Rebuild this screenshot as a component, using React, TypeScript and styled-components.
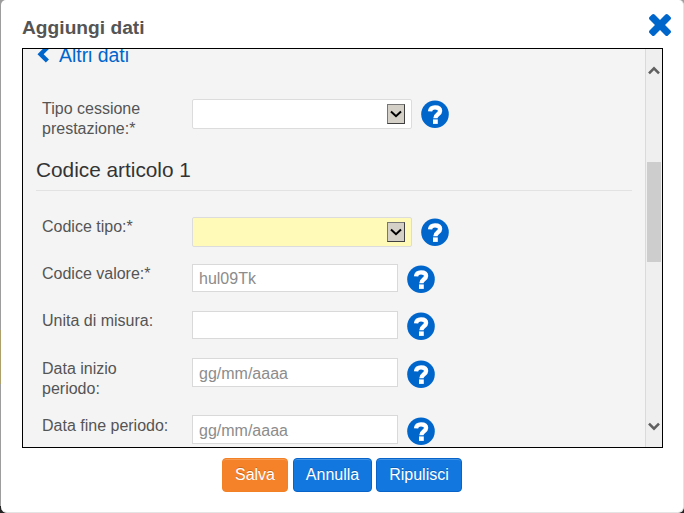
import React from "react";
import styled, { createGlobalStyle } from "styled-components";

const Global = createGlobalStyle`
  * { box-sizing: border-box; }
  body { margin: 0; background: #a3a3a3; font: 16px/20px "Liberation Sans", Arial, sans-serif; color: #555; overflow: hidden; }
`;

const Backdrop = styled.div`
  width: 684px;
  height: 513px;
  background: linear-gradient(#9d9d9d 0 330px, #ada06b 330px 384px, #9d9d9d 384px 506px, #222 506px);
  padding-left: 1px;
`;

const Dialog = styled.div`
  height: 513px;
  display: flex;
  flex-direction: column;
  background: #fff;
  border-right: 1px solid #e4e4e4;
  border-bottom: 1px solid #e4e4e4;
  border-radius: 5px 5px 6px 6px;
  padding: 0 20px 0 21px;
`;

const Header = styled.header`
  height: 48px;
  display: flex;
  justify-content: space-between;
  padding-top: 14px;
  margin-right: -8px;
`;

const Title = styled.h1`
  margin: 0;
  padding-top: 2px;
  font-size: 19.2px;
  line-height: 24px;
  font-weight: bold;
`;

const CloseButton = styled.button`
  width: 22px;
  height: 22px;
  padding: 0;
  border: 0;
  background: none;
  color: #0066cc;
  svg { display: block; }
`;

const Panel = styled.div`
  width: 641px;
  height: 400px;
  display: flex;
  border: 1px solid #000;
  background: #f4f4f4;
  overflow: hidden;
`;

const Content = styled.div`
  width: 622px;
  height: 398px;
  overflow: hidden;
`;

const BackLink = styled.a`
  display: flex;
  height: 22px;
  margin: -5px 0 33px 14px;
  gap: 9px;
  color: #0066cc;
  font-size: 19.4px;
  line-height: 22px;
  svg { margin-top: 2px; }
`;

const Row = styled.div<{ $h: number }>`
  display: flex;
  align-items: flex-start;
  height: ${(p) => p.$h}px;
  padding-left: 19px;
`;

const Label = styled.label<{ $top?: number }>`
  width: 150px;
  padding-top: ${(p) => p.$top ?? 0}px;
  white-space: pre-line;
`;

const Input = styled.input<{ $h: number; $top: number }>`
  width: 206px;
  height: ${(p) => p.$h}px;
  padding: ${(p) => p.$top}px 5px 0 6px;
  border: 1px solid #d9d9d9;
  border-radius: 0;
  background: #fff;
  font: 16px "Liberation Sans", Arial, sans-serif;
  outline: 0;
  &::placeholder { color: #8c8c8c; opacity: 1; }
`;

const Select = styled.div<{ $required?: boolean }>`
  width: 220px;
  height: 30px;
  display: flex;
  align-items: center;
  justify-content: flex-end;
  padding-right: 6px;
  border: 1px solid #dcdcdc;
  border-radius: 2px;
  background: ${(p) => (p.$required ? "#fffab8" : "#fff")};
`;

const Arrow = styled.span`
  width: 18px;
  height: 20px;
  display: flex;
  align-items: center;
  justify-content: center;
  border: 1px solid #777;
  border-right-color: #404040;
  border-bottom-color: #404040;
  background: #d4d0c8;
`;

const HelpIcon = styled.svg<{ $top: number }>`
  width: 28px;
  height: 28px;
  flex: none;
  margin: ${(p) => p.$top}px 0 0 9px;
`;

const Section = styled.h2`
  height: 34px;
  margin: 0 13px 26px;
  border-bottom: 1px solid #e2e2e2;
  color: #333;
  font-size: 20.8px;
  line-height: 26px;
  font-weight: normal;
`;

const Scrollbar = styled.div`
  width: 17px;
  height: 398px;
  display: flex;
  flex-direction: column;
  align-items: center;
  border-left: 1px solid #dadada;
  background: #efefef;
  padding: 17px 0 16px;
`;

const Thumb = styled.div`
  width: 14px;
  height: 100px;
  margin: 87px 0 auto;
  background: #cdcdcd;
`;

const Footer = styled.footer`
  display: flex;
  justify-content: center;
  gap: 4px;
  padding: 10px 2px 0 0;
`;

const Button = styled.button<{ $w: number; $primary?: boolean }>`
  width: ${(p) => p.$w}px;
  height: 34px;
  margin-right: ${(p) => (p.$primary ? 1 : 0)}px;
  padding: 0 0 0 1px;
  border: 1px solid ${(p) => (p.$primary ? "#f28024" : "#0864c8")};
  border-radius: 4px;
  background: ${(p) => (p.$primary ? "#f58229" : "#1277de")};
  box-shadow: inset 0 1px 0 rgba(255, 255, 255, 0.2);
  color: #fff;
  font: 16px "Liberation Sans", Arial, sans-serif;
  text-shadow: 0 -1px 0 rgba(0, 0, 0, 0.2);
`;

const Help = ({ top = 1 }: { top?: number }) => (
  <HelpIcon $top={top} viewBox="0 0 28 28">
    <circle cx="14" cy="14.2" r="13.8" fill="#0066cc" />
    <path
      d="M9 11.4C9.3 8.5 11.2 7.3 14 7.3c3.2 0 5.1 1.4 5.1 3.8 0 3.3-4.7 3.2-4.7 7.2"
      fill="none"
      stroke="#fff"
      strokeWidth="4.3"
    />
    <path d="M12 19.4h4.8v4.5H12z" fill="#fff" />
  </HelpIcon>
);

const Dropdown = ({ required }: { required?: boolean }) => (
  <Select $required={required}>
    <Arrow>
      <svg width="12" height="8" viewBox="0 0 12 8">
        <path d="M1 1.5l5 4.7 5-4.7" fill="none" stroke="#000" strokeWidth="2" />
      </svg>
    </Arrow>
  </Select>
);

const ScrollArrow = ({ down }: { down?: boolean }) => (
  <svg width="12" height="9" viewBox="0 0 12 9">
    <path d={down ? "M1 1.7l5 5 5-5" : "M1 7.3l5-5 5 5"} fill="none" stroke="#606060" strokeWidth="2.6" />
  </svg>
);

const fields = [
  { label: "Codice valore:*", placeholder: "hul09Tk", row: 47, height: 28, help: 1 },
  { label: "Unita di misura:", placeholder: "", row: 47, height: 28, help: 1 },
  { label: "Data inizio\nperiodo:", placeholder: "gg/mm/aaaa", row: 57, height: 29, help: 2, date: true },
  { label: "Data fine periodo:", placeholder: "gg/mm/aaaa", row: 47, height: 29, help: 2, date: true },
];

export default function App() {
  return (
    <Backdrop>
      <Global />
      <Dialog>
        <Header>
          <Title>Aggiungi dati</Title>
          <CloseButton aria-label="Chiudi">
            <svg width="22" height="22" viewBox="302 366 1188 1188" fill="currentColor">
              <path d="M1490 1322q0 40-28 68l-136 136q-28 28-68 28t-68-28l-294-294-294 294q-28 28-68 28t-68-28l-136-136q-28-28-28-68t28-68l294-294-294-294q-28-28-28-68t28-68l136-136q28-28 68-28t68 28l294 294 294-294q28-28 68-28t68 28l136 136q28 28 28 68t-28 68l-294 294 294 294q28 28 28 68z" />
            </svg>
          </CloseButton>
        </Header>
        <Panel>
          <Content>
            <BackLink>
              <svg width="13" height="17" viewBox="0 0 13 17">
                <path d="M10.4 1.4 3.6 8.2l6.8 6.8" fill="none" stroke="currentColor" strokeWidth="4.4" />
              </svg>
              Altri dati
            </BackLink>
            <Row $h={58}>
              <Label>{"Tipo cessione\nprestazione:*"}</Label>
              <Dropdown />
              <Help />
            </Row>
            <Section>Codice articolo 1</Section>
            <Row $h={47}>
              <Label>Codice tipo:*</Label>
              <Dropdown required />
              <Help />
            </Row>
            {fields.map((f) => (
              <Row key={f.label} $h={f.row}>
                <Label $top={f.date ? 1 : 0}>{f.label}</Label>
                <Input $h={f.height} $top={f.date ? 3 : 1} placeholder={f.placeholder} />
                <Help top={f.help} />
              </Row>
            ))}
          </Content>
          <Scrollbar>
            <ScrollArrow />
            <Thumb />
            <ScrollArrow down />
          </Scrollbar>
        </Panel>
        <Footer>
          <Button $w={66} $primary>Salva</Button>
          <Button $w={79}>Annulla</Button>
          <Button $w={86}>Ripulisci</Button>
        </Footer>
      </Dialog>
    </Backdrop>
  );
}
